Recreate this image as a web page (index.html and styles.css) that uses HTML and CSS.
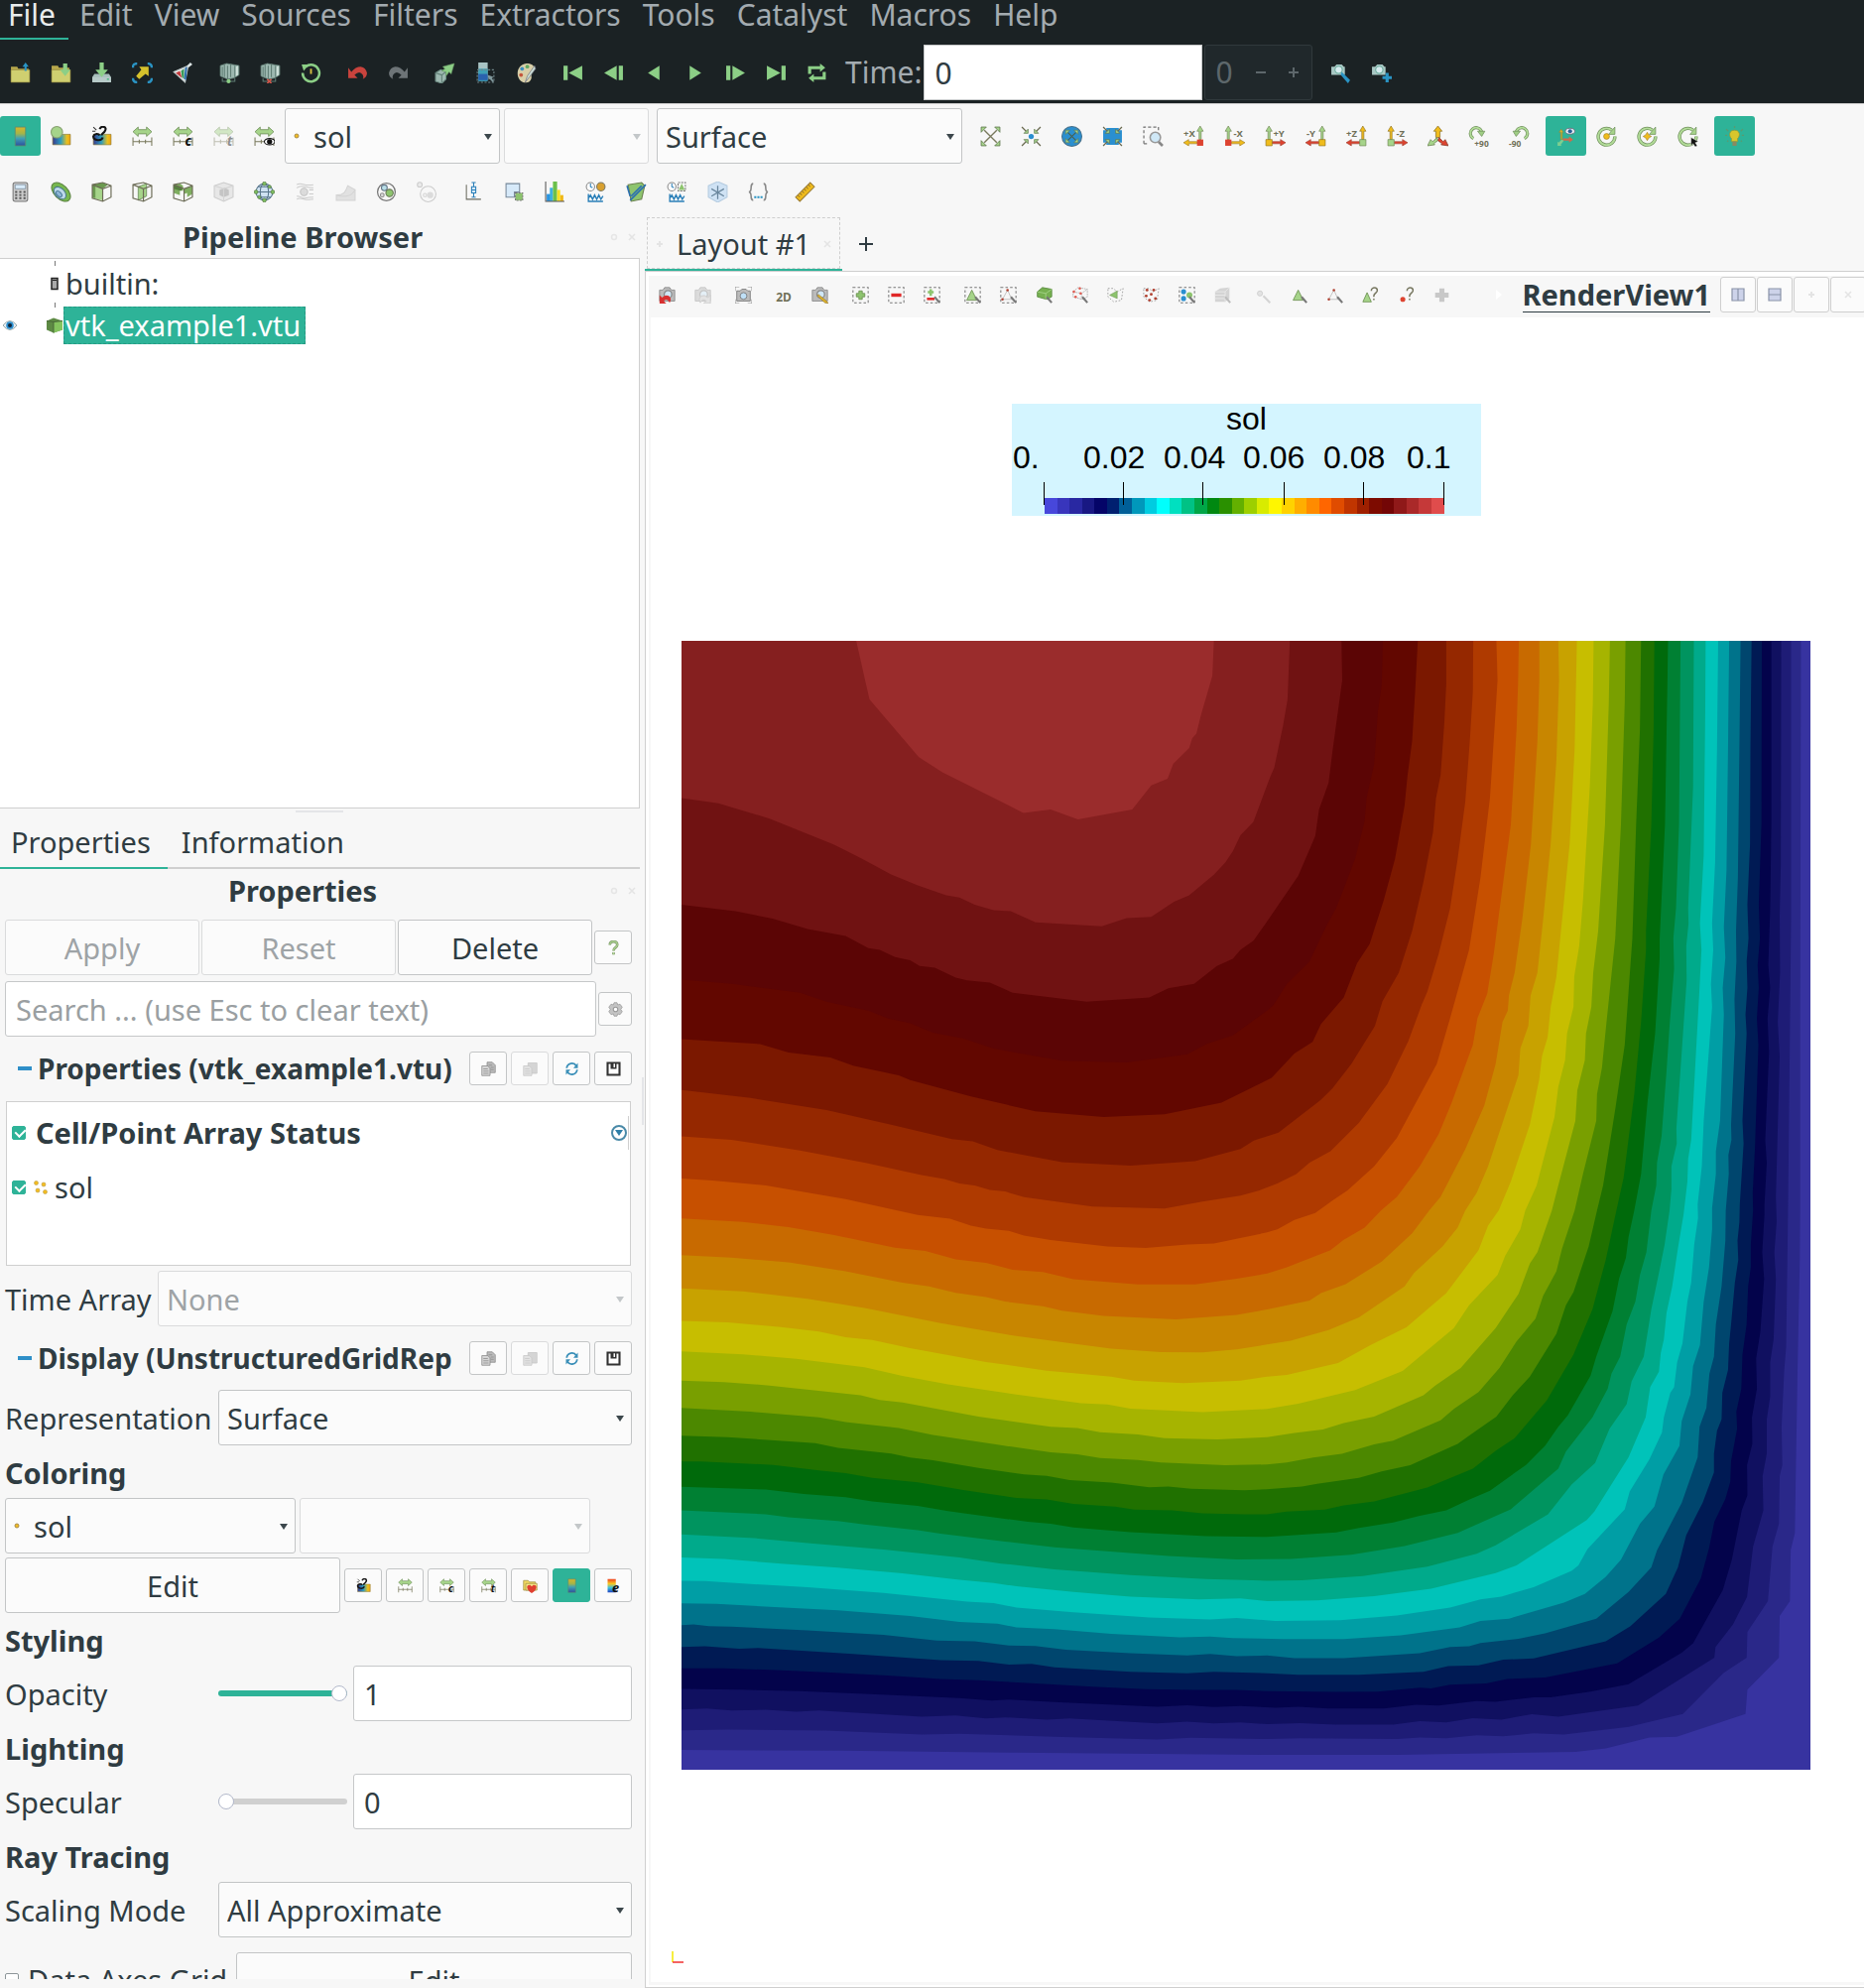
FILE: index.html
```html
<!DOCTYPE html>
<html lang="en">
<head>
<meta charset="utf-8">
<title>ParaView</title>
<link rel="stylesheet" href="styles.css">
</head>
<body>
<svg class="defs" aria-hidden="true">
<defs>
<linearGradient id="lut" x1="0" y1="0" x2="0" y2="1"><stop offset="0" stop-color="#d9b52a"/><stop offset=".35" stop-color="#a3b54a"/><stop offset=".6" stop-color="#3fa0b5"/><stop offset="1" stop-color="#2d4f9e"/></linearGradient>
<linearGradient id="lutx" x1="0" y1="0" x2="1" y2="0"><stop offset="0" stop-color="#3a3a8c"/><stop offset=".45" stop-color="#2a9cc0"/><stop offset=".8" stop-color="#e8c020"/><stop offset="1" stop-color="#f0a010"/></linearGradient>
<linearGradient id="jet" x1="0" y1="0" x2="0" y2="1"><stop offset="0" stop-color="#f04020"/><stop offset=".35" stop-color="#f8c820"/><stop offset=".65" stop-color="#3cc0e0"/><stop offset="1" stop-color="#2040c0"/></linearGradient>
</defs>
<symbol id="open" viewBox="0 0 20 20"><path d="M1 4h6l1 2h10v13H1z" fill="#b9a94c"/><path d="M1 7h18v12H1z" fill="#cfcf70" stroke="#8a7f3a" stroke-width=".6"/><path d="M15 0l3 4h-2v4h-2V4h-2z" fill="#2a94c4"/></symbol>
<symbol id="load" viewBox="0 0 20 20"><path d="M1 3h6l1 2h10v14H1z" fill="#b9a94c"/><path d="M1 7h18v12H1z" fill="#cfcf70" stroke="#8a7f3a" stroke-width=".6"/><path d="M12 1h4v6h3l-5 6-5-6h3z" fill="#8ccf86"/></symbol>
<symbol id="save" viewBox="0 0 20 20"><path d="M3 11h14l2 3v5H1v-5z" fill="#a9bfbd"/><path d="M1 14h18v5H1z" fill="#b7cac8"/><path d="M15 16h2" stroke="#5b8" stroke-width="1.500"/><path d="M8 0h4v7h4l-6 7-6-7h4z" fill="#8ccf86"/></symbol>
<symbol id="shot" viewBox="0 0 20 20"><path d="M1 5V4q0-3 4-3M15 1q4 0 4 4M1 15q0 4 4 4M15 19q4 0 4-4" fill="none" stroke="#2a94c4" stroke-width="2.200"/><path d="M16 4v9l-3-2-6 5-3-3 5-6-2-3z" fill="#d6c22c"/></symbol>
<symbol id="prism" viewBox="0 0 20 20"><path d="M1 9l14-6-3 16z" fill="#eee" stroke="#b8c4c4"/><path d="M3 10l4-2 2 7z" fill="#c0393b"/><path d="M8 8l3-2v10l-2-2z" fill="#3a9a5a"/><path d="M12 5l2-1-1 13-2-1z" fill="#2d6fae"/><path d="M14 3l3-3 2 2-4 3z" fill="#dfe8e8"/></symbol>
<symbol id="srv" viewBox="0 0 20 20"><path d="M1 3l6-2 6 1 6 1v9l-5 3-6 1-7-3z" fill="#9db8b0" stroke="#5f7d74" stroke-width=".8"/><path d="M5 2v12M8 3v13M11 2v12M15 3v11M3 4v9" stroke="#5f7d74" stroke-width="1"/><path d="M16 4l2-1v9l-2 1z" fill="#cfe0da"/><path d="M3 15v3h12v-3" fill="none" stroke="#5f7d74"/></symbol>
<symbol id="connect" viewBox="0 0 20 20"><use href="#srv"/><circle cx="9" cy="18" r="2" fill="#8ccf86"/></symbol>
<symbol id="disconnect" viewBox="0 0 20 20"><use href="#srv"/><path d="M7 16l4 4M11 16l-4 4" stroke="#d0564a" stroke-width="1.600"/></symbol>
<symbol id="reset" viewBox="0 0 20 20"><path d="M5 4a8 8 0 1 1-3 6" fill="none" stroke="#8ccf86" stroke-width="2.400"/><path d="M1 2l7 0-5 6z" fill="#8ccf86"/><path d="M10 6v5" stroke="#d8c040" stroke-width="1.800"/></symbol>
<symbol id="undo" viewBox="0 0 20 20"><path d="M1 5v10h9l-3-3q5-5 8 0 1 2 0 4 4-2 4-6-1-5-6-6-5 0-9 5z" fill="#c9433d"/></symbol>
<symbol id="redo" viewBox="0 0 20 20"><path d="M19 5v10h-9l3-3Q8 7 5 12q-1 2 0 4-4-2-4-6 1-5 6-6 5 0 9 5z" fill="#6d7477"/></symbol>
<symbol id="cubeg" viewBox="0 0 20 20"><path d="M1 10l5-3 5 2v7l-4 4-6-2z" fill="#9db8b0" stroke="#6f8f86"/><path d="M1 10l6 2 4-3M7 12v7" fill="none" stroke="#5f7d74"/><path d="M8 4l11-3-3 10-2-2-3 4V9L7 8l3-2z" fill="#8ccf86" stroke="#6a9a68" stroke-width=".6"/></symbol>
<symbol id="lutsel" viewBox="0 0 20 20"><path d="M3 0h9v17H3z" fill="#a9c4c4"/><path d="M3 6h9v12H3z" fill="#3fa0b5"/><path d="M3 11h9v6H3z" fill="#2a62ae"/><path d="M2 7h16v12H2z" fill="none" stroke="#6f8488" stroke-width="1" stroke-dasharray="2 1.500"/><path d="M12 12l6 2-2 1 2 3-1 1-3-3-1 1z" fill="#81989c"/></symbol>
<symbol id="palette" viewBox="0 0 20 20"><path d="M10 1c6 0 9 3 7 6-3 3-2 4-2 8-1 4-4 5-8 4C-1 16 0 2 10 1z" fill="#d8cfa8"/><circle cx="6" cy="6" r="1.800" fill="#3b8fc0"/><circle cx="11" cy="4" r="1.800" fill="#61a860"/><circle cx="5" cy="12" r="1.800" fill="#c4553c"/><path d="M18 3l-7 10-2 6 4-5 6-8z" fill="#c9dcd4" stroke="#667" stroke-width=".6"/></symbol>
<symbol id="first" viewBox="0 0 20 20"><path d="M1 3h4v14H1zM19 3v14L6 10z" fill="#8ccf86"/></symbol>
<symbol id="prev" viewBox="0 0 20 20"><path d="M15 3h4v14h-4zM13 3v14L1 10z" fill="#8ccf86"/></symbol>
<symbol id="back" viewBox="0 0 20 20"><path d="M15 3v14L4 10z" fill="#8ccf86"/></symbol>
<symbol id="play" viewBox="0 0 20 20"><path d="M5 3v14l11-7z" fill="#8ccf86"/></symbol>
<symbol id="next" viewBox="0 0 20 20"><path d="M1 3h4v14H1zM7 3v14l12-7z" fill="#8ccf86"/></symbol>
<symbol id="last" viewBox="0 0 20 20"><path d="M15 3h4v14h-4zM1 3v14l13-7z" fill="#8ccf86"/></symbol>
<symbol id="loop" viewBox="0 0 20 20"><path d="M3 11V5h11M17 9v6H6" fill="none" stroke="#8ccf86" stroke-width="3"/><path d="M13 1l5 4-5 4zM7 11l-5 4 5 4z" fill="#8ccf86"/></symbol>
<symbol id="cam1" viewBox="0 0 20 20"><path d="M1 4h3l2-2h5l2 2h1v8H1z" fill="#a9c8c4"/><circle cx="8" cy="7" r="3.500" fill="#d8ecf0" stroke="#6a9"/><path d="M11 9l8 8-2 3-7-8z" fill="#2a94c4"/></symbol>
<symbol id="cam2" viewBox="0 0 20 20"><path d="M1 4h3l2-2h5l2 2h1v8H1z" fill="#a9c8c4"/><circle cx="8" cy="7" r="3.500" fill="#d8ecf0" stroke="#6a9"/><path d="M14 10h3v3h3v3h-3v3h-3v-3h-3v-3h3z" fill="#2a94c4"/></symbol>
<symbol id="lutbar" viewBox="0 0 20 20"><path d="M5 1h10v18H5z" fill="url(#lut)" stroke="#5a8a70" stroke-width=".8"/></symbol>
<symbol id="solid" viewBox="0 0 20 20"><path d="M2 8h17v10H2z" fill="url(#lutx)" stroke="#887730" stroke-width=".6"/><circle cx="6" cy="6" r="5.500" fill="#a6d48a" stroke="#86a070"/></symbol>
<symbol id="link" viewBox="0 0 20 20"><path d="M2 8h17v10H2z" fill="url(#lutx)" stroke="#887730" stroke-width=".6"/><path d="M8 3c2-4 8-2 5 2-1 2-3 2-3 4M11 11c-1 4-9 3-9-1 1-3 5-3 6-1" fill="none" stroke="#151515" stroke-width="2"/><path d="M2 1l3 3M1 5h3" stroke="#333"/></symbol>
<symbol id="rng" viewBox="0 0 20 20"><path d="M1 5.500l5-4.500v2.500h8V1l5 4.500-5 4.500V7.500H6V10z" fill="#a6d48a" stroke="#71905c" stroke-width=".8"/><path d="M1 11v8M19 11v8M1 15h18M7 13v4M13 13v4" stroke="#79795c" fill="none"/></symbol>
<symbol id="rngv" viewBox="0 0 20 20"><use href="#rng"/><ellipse cx="15" cy="15" rx="5" ry="3" fill="#fff" stroke="#111"/><circle cx="15" cy="15" r="2.500" fill="#111"/></symbol>
<symbol id="cam-a" viewBox="0 0 20 20"><path d="M4 4l12 12M16 4L4 16" stroke="#79795c" stroke-width="1.300"/><path d="M1 1h5L1 6zM19 1v5l-5-5zM1 19v-5l5 5zM19 19h-5l5-5z" fill="#a6d48a" stroke="#5f7850" stroke-width=".8"/></symbol>
<symbol id="arr4" viewBox="0 0 20 20"><path d="M1 1l5 5M19 1l-5 5M1 19l5-5M19 19l-5-5" stroke="#6a6a50" stroke-width="1.200"/><path d="M7 7H3l4-4zM13 7V3l4 4zM7 13v4l-4-4zM13 13h4l-4 4z" fill="#a6d48a" stroke="#5f7850" stroke-width=".7"/></symbol>
<symbol id="cam-b" viewBox="0 0 20 20"><use href="#arr4"/><circle cx="10" cy="10" r="2.500" fill="#2a8fd0"/></symbol>
<symbol id="cam-c" viewBox="0 0 20 20"><circle cx="10" cy="10" r="9.500" fill="#2a8fd0" stroke="#47708a"/><path d="M6 6l8 8M14 6l-8 8" stroke="#49604c"/><path d="M4 4h4L4 8zM16 4v4l-4-4zM4 16v-4l4 4zM16 16h-4l4-4z" fill="#a6d48a" stroke="#5f7850" stroke-width=".6"/></symbol>
<symbol id="cam-d" viewBox="0 0 20 20"><path d="M4 2h12v2h3v12h-3v2H4v-2H1V4h3z" fill="#2a8fd0"/><use href="#arr4"/></symbol>
<symbol id="zoombox" viewBox="0 0 20 20"><path d="M1 17V1h14v4M1 17h5" fill="none" stroke="#777" stroke-width="1.200" stroke-dasharray="3 2"/><path d="M15 15l4 4" stroke="#888" stroke-width="2.500"/><circle cx="12" cy="11" r="5" fill="#cfe8f7" stroke="#999" stroke-width="1.500"/></symbol>
<symbol id="px" viewBox="0 0 20 20"><path d="M16 0l3 5h-2v8h-2V5h-2z" fill="#a6d48a" stroke="#6a8050" stroke-width=".6"/><path d="M0 16l5-3v2h8v2H5v2z" fill="#f0bc1c" stroke="#a07a20" stroke-width=".6"/><path d="M13 13h6v6h-6z" fill="#dd4330"/></symbol>
<symbol id="mx" viewBox="0 0 20 20"><path d="M4 0l3 5H5v8H3V5H1z" fill="#a6d48a" stroke="#6a8050" stroke-width=".6"/><path d="M20 16l-5-3v2H7v2h8v2z" fill="#f0bc1c" stroke="#a07a20" stroke-width=".6"/><path d="M1 13h6v6H1z" fill="#dd4330"/></symbol>
<symbol id="py" viewBox="0 0 20 20"><path d="M4 0l3 5H5v8H3V5H1z" fill="#a6d48a" stroke="#6a8050" stroke-width=".6"/><path d="M20 16l-5-3v2H7v2h8v2z" fill="#dd4330" stroke="#a04030" stroke-width=".6"/><path d="M1 13h6v6H1z" fill="#f0bc1c" stroke="#8a6f20" stroke-width=".6"/></symbol>
<symbol id="my" viewBox="0 0 20 20"><path d="M16 0l3 5h-2v8h-2V5h-2z" fill="#a6d48a" stroke="#6a8050" stroke-width=".6"/><path d="M0 16l5-3v2h8v2H5v2z" fill="#dd4330" stroke="#a04030" stroke-width=".6"/><path d="M13 13h6v6h-6z" fill="#f0bc1c" stroke="#8a6f20" stroke-width=".6"/></symbol>
<symbol id="pz" viewBox="0 0 20 20"><path d="M16 0l3 5h-2v8h-2V5h-2z" fill="#f0bc1c" stroke="#8a6f20" stroke-width=".6"/><path d="M0 16l5-3v2h8v2H5v2z" fill="#dd4330" stroke="#a04030" stroke-width=".6"/><path d="M13 13h6v6h-6z" fill="#a6d48a" stroke="#6a8050" stroke-width=".6"/></symbol>
<symbol id="mz" viewBox="0 0 20 20"><path d="M4 0l3 5H5v8H3V5H1z" fill="#f0bc1c" stroke="#8a6f20" stroke-width=".6"/><path d="M20 16l-5-3v2H7v2h8v2z" fill="#dd4330" stroke="#a04030" stroke-width=".6"/><path d="M1 13h6v6H1z" fill="#a6d48a" stroke="#6a8050" stroke-width=".6"/></symbol>
<symbol id="iso" viewBox="0 0 20 20"><path d="M10 0l4 5h-2v6H8V5H6z" fill="#f0bc1c" stroke="#8a6f20" stroke-width=".7"/><path d="M9 11l-4 4-2-2-3 6 7-1-1-1 4-3z" fill="#a6d48a" stroke="#6a8050" stroke-width=".7"/><path d="M11 11l4 4 2-2 3 6-7-1 1-1-4-3z" fill="#dd4330" stroke="#803a2a" stroke-width=".7"/></symbol>
<symbol id="rot1" viewBox="0 0 20 20"><path d="M5 12A5.500 5.500 0 1 1 13 6" fill="none" stroke="#6f8f5c" stroke-width="3"/><path d="M5 12A5.500 5.500 0 1 1 13 6" fill="none" stroke="#b2dc98" stroke-width="1.600"/><path d="M9 5h7l-3 5z" fill="#9fce84" stroke="#6f8f5c" stroke-width=".7"/></symbol>
<symbol id="rot2" viewBox="0 0 20 20"><path d="M15 12A5.500 5.500 0 1 0 7 6" fill="none" stroke="#6f8f5c" stroke-width="3"/><path d="M15 12A5.500 5.500 0 1 0 7 6" fill="none" stroke="#b2dc98" stroke-width="1.600"/><path d="M11 5H4l3 5z" fill="#9fce84" stroke="#6f8f5c" stroke-width=".7"/></symbol>
<symbol id="axes" viewBox="0 0 20 20"><path d="M5 13V6H3.500l2-3 2 3H6.500v7z" fill="#d8b52a" stroke="#8a8a40" stroke-width=".6"/><path d="M7 12h6v-2l4 3-4 3v-2H7z" fill="#d06a4c"/><path d="M6 13l-3 3-1-1v4h4l-1-1 3-4z" fill="#7ccf90"/><ellipse cx="14" cy="5" rx="4.500" ry="2.800" fill="#e8eef4" stroke="#667" stroke-width=".8"/><circle cx="14" cy="5" r="2" fill="#2a5f98"/></symbol>
<symbol id="ring" viewBox="0 0 20 20"><path d="M15 4a8 8 0 1 0 3 6" fill="none" stroke="#6f8f5c" stroke-width="3.200"/><path d="M15 4a8 8 0 1 0 3 6" fill="none" stroke="#b2dc98" stroke-width="1.800"/><path d="M18 1v7h-6z" fill="#a6d48a" stroke="#6f8f5c" stroke-width=".7"/></symbol>
<symbol id="ctr1" viewBox="0 0 20 20"><use href="#ring"/><circle cx="10" cy="10" r="2.800" fill="#f0bc1c" stroke="#a08030" stroke-width=".6"/></symbol>
<symbol id="ctr2" viewBox="0 0 20 20"><use href="#ring"/><path d="M10 6l1.500 2.500L14 10l-2.500 1.500L10 14l-1.500-2.500L6 10l2.500-1.500z" fill="#f0bc1c" stroke="#a08030" stroke-width=".6"/></symbol>
<symbol id="ctr3" viewBox="0 0 20 20"><use href="#ring"/><path d="M13 11l7 4-3 1 2 3-2 1-2-3-2 2z" fill="#111" stroke="#fff" stroke-width=".4"/></symbol>
<symbol id="bulb" viewBox="0 0 20 20"><path d="M10 4c5 0 6 5 3 8v3H7v-3C4 9 5 4 10 4z" fill="#d8c62c" stroke="#8a9a40" stroke-width=".8"/><path d="M8 15h4v4H8z" fill="#8a8a60"/><path d="M10 0v2M2 3l2 2M18 3l-2 2M1 9h2M19 9h-2M3 15l1-1M17 15l-1-1" stroke="#5a9a70" stroke-width="1.200"/></symbol>
<symbol id="calc" viewBox="0 0 20 20"><rect x="3" y="1" width="14" height="18" rx="2" fill="#ccc" stroke="#777"/><path d="M5 3h10v4H5z" fill="#d8ebfa" stroke="#789" stroke-width=".7"/><path d="M5 10h10M5 13h10M5 16h10" stroke="#555" stroke-width="1.800" stroke-dasharray="2 2"/></symbol>
<symbol id="contour" viewBox="0 0 20 20"><ellipse cx="10" cy="10" rx="11" ry="6.500" transform="rotate(45 10 10)" fill="#77b84e" stroke="#5a8040"/><ellipse cx="9" cy="11" rx="7" ry="4.500" transform="rotate(45 9 11)" fill="#bcd8ea" stroke="#4a7a88"/><ellipse cx="8" cy="12" rx="3.500" ry="2" transform="rotate(45 8 12)" fill="#8fb8d8" stroke="#4a7a98"/></symbol>
<symbol id="wire" viewBox="0 0 20 20"><path d="M1 3l10-2 8 3v11l-8 4-10-3zM1 3l10 4 8-3M11 7v12" fill="none" stroke="#6b6b55" stroke-width="1.100"/></symbol>
<symbol id="clip" viewBox="0 0 20 20"><path d="M1 3l10 3v12L1 16z" fill="#a6d48a"/><path d="M1 3l10-2 5 2-5 4z" fill="#6b9a50"/><path d="M1 3l3 1v12l-3-1z" fill="#6b9a50"/><use href="#wire"/></symbol>
<symbol id="slice" viewBox="0 0 20 20"><path d="M6 5l8-3v12l-8 4z" fill="#a6d48a" stroke="#5f8050" stroke-width=".7"/><use href="#wire"/></symbol>
<symbol id="thresh" viewBox="0 0 20 20"><path d="M1 3l6-1 3 2v5l-3-1v5l-6-2zM11 7l8-3v8l-5 3v-4l-3 1z" fill="#7fae60"/><path d="M1 3l9 3-2 3-7-2z" fill="#55803e"/><use href="#wire"/></symbol>
<symbol id="extract" viewBox="0 0 20 20"><path d="M1 4l9-3 9 3v11l-9 4-9-4z" fill="#d5d5d5" stroke="#999"/><path d="M6 8l5-2 4 2v5l-5 2-4-2z" fill="#888"/><path d="M1 4l9 3 9-3M10 7v12" fill="none" stroke="#aaa"/></symbol>
<symbol id="glyph" viewBox="0 0 20 20"><circle cx="10" cy="10" r="8" fill="#cfe2f2" stroke="#57748a"/><ellipse cx="10" cy="10" rx="4" ry="8" fill="none" stroke="#57748a"/><path d="M2 10h16M4 5h12M4 15h12" stroke="#57748a"/><g fill="#7fc060" stroke="#507040" stroke-width=".6"><circle cx="10" cy="2" r="1.800"/><circle cx="10" cy="18" r="1.800"/><circle cx="2" cy="10" r="1.800"/><circle cx="18" cy="10" r="1.800"/><circle cx="5" cy="15" r="1.500"/><circle cx="15" cy="5" r="1.500"/></g></symbol>
<symbol id="stream" viewBox="0 0 20 20"><circle cx="9" cy="10" r="3.500" fill="#bbb" stroke="#888"/><path d="M2 3c5-3 6 2 16 0M2 6c4-3 6-1 9-1 3 1 5 1 7 1M2 17c5-3 6 2 16 0M2 14c4 0 5 2 8 2 3-1 5-1 8-1M14 8h4M14 12h4" fill="none" stroke="#999"/></symbol>
<symbol id="warp" viewBox="0 0 20 20"><path d="M1 13c7 0 9-3 11-9l7 4v10H1z" fill="#c8c8c8" stroke="#aaa"/><path d="M1 13c8 2 14 2 18-5" fill="none" stroke="#aaa"/></symbol>
<symbol id="group" viewBox="0 0 20 20"><circle cx="10" cy="10" r="8.500" fill="#f7f7f7" stroke="#777" stroke-width="1.200"/><circle cx="8" cy="6" r="2.800" fill="#b9dfe8" stroke="#678"/><circle cx="13" cy="11" r="3.500" fill="#8dc46e" stroke="#675"/><circle cx="6" cy="13" r="1.800" fill="#ddd" stroke="#888"/></symbol>
<symbol id="ungroup" viewBox="0 0 20 20"><circle cx="11" cy="12" r="7.500" fill="#f7f7f7" stroke="#999"/><circle cx="3" cy="3" r="2.300" fill="#ddd" stroke="#999"/><circle cx="13" cy="13" r="3" fill="#bbb"/><circle cx="8" cy="13" r="1.600" fill="none" stroke="#aaa"/></symbol>
<symbol id="probe" viewBox="0 0 20 20"><path d="M3 3v14h14" fill="none" stroke="#6b6b60"/><path d="M10 1v14M8 1h4M8 15h4" stroke="#2a7fb8"/><path d="M8 5h4v6H8zM8 8h4" fill="#d6eafa" stroke="#2a7fb8"/></symbol>
<symbol id="extsel" viewBox="0 0 20 20"><path d="M2 2h13v8h-5v5H2z" fill="#d6e9f9" stroke="#789"/><path d="M11 11h7v7h-7z" fill="#8dc46e" stroke="#777" stroke-dasharray="2 1"/></symbol>
<symbol id="hist" viewBox="0 0 20 20"><path d="M2 12h4v7H2z" fill="#2a94e0"/><path d="M5 6h3v13H5z" fill="#3cb0e0"/><path d="M8 0h4v19H8z" fill="#6cc04a"/><path d="M12 8h3v11h-3z" fill="#f8e020"/><path d="M15 13h3v6h-3z" fill="#f0b818"/><path d="M1 0v19h18" fill="none" stroke="#555"/></symbol>
<symbol id="wave" viewBox="0 0 20 20"><path d="M3 12v7h14M3 16l2-3 2 4 2-4 2 4 2-4 2 4 2-3" fill="none" stroke="#2a7fb8" stroke-width="1.300"/></symbol>
<symbol id="time1" viewBox="0 0 20 20"><circle cx="5" cy="5" r="4" fill="#fff" stroke="#888"/><path d="M5 2v3l2 1" fill="none" stroke="#2a7fb8"/><circle cx="15" cy="5" r="4" fill="#d8a030" stroke="#776"/><use href="#wave"/></symbol>
<symbol id="pline" viewBox="0 0 20 20"><path d="M2 3l13-2 3 3-3 13-10 2z" fill="#8dc46e" stroke="#6b8050"/><path d="M1 4l3 10M4 18L19 3M5 14l10-10" stroke="#2a6fb0" stroke-width="1.500" fill="none"/></symbol>
<symbol id="time2" viewBox="0 0 20 20"><circle cx="5" cy="5" r="4" fill="#fff" stroke="#888"/><path d="M5 2v3l2 1" fill="none" stroke="#2a7fb8"/><path d="M11 1h7v8h-7z" fill="none" stroke="#777" stroke-dasharray="2 1"/><path d="M14.500 2l3 6h-6z" fill="#8dc46e"/><use href="#wave"/></symbol>
<symbol id="frost" viewBox="0 0 20 20"><path d="M1 4l9-4 9 4v11l-9 5-9-5z" fill="#cfe2f4" stroke="#b5cce0"/><path d="M10 4v13M4 7l12 7M16 7L4 14" stroke="#68859c" stroke-width="1.200"/></symbol>
<symbol id="braces" viewBox="0 0 20 20"><path d="M5 2C1 2 5 9 1 10c4 1 0 8 4 8M15 2c4 0 0 7 4 8-4 1 0 8-4 8" fill="none" stroke="#888" stroke-width="1.500"/><path d="M6 15h2M9 15h2M12 15h2" stroke="#2a94c4" stroke-width="2"/></symbol>
<symbol id="ruler" viewBox="0 0 20 20"><path d="M15 1l4 4L5 19l-4-4z" fill="#f0bc1c" stroke="#9a7a30"/><path d="M13 3l2 2M11 5l2 2M9 7l2 2M7 9l2 2M5 11l2 2M3 13l2 2" stroke="#9a7a30"/></symbol>
<symbol id="camera" viewBox="0 0 20 20"><path d="M1 4h4l2-3h6l2 3h4v13H1z" fill="#bbb" stroke="#888"/><circle cx="11" cy="9" r="4.500" fill="#cfe6f5" stroke="#888" stroke-width="1.500"/></symbol>
<symbol id="camundo" viewBox="0 0 20 20"><use href="#camera"/><path d="M1 10v10h8l-3-3q4-4 7 2 3-5-1-8-4-2-8 2z" fill="#d83030"/></symbol>
<symbol id="camredo" viewBox="0 0 20 20"><use href="#camera"/><path d="M19 10v10h-8l3-3q-4-4-7 2-3-5 1-8 4-2 8 2z" fill="#ccc" stroke="#999"/></symbol>
<symbol id="capture" viewBox="0 0 20 20"><path d="M0 5V0h5M15 0h5v5M20 15v5h-5M5 20H0v-5" fill="none" stroke="#888"/><path d="M2 5h4l2-2h5l2 2h3v12H2z" fill="#bbb" stroke="#777"/><circle cx="10" cy="11" r="4" fill="#bfe0f7" stroke="#777"/></symbol>
<symbol id="camedit" viewBox="0 0 20 20"><use href="#camera"/><path d="M8 9l10 8 2 3-4-1-9-8z" fill="#e0b428" stroke="#8a7030" stroke-width=".7"/></symbol>
<symbol id="dash" viewBox="0 0 20 20"><path d="M1 1h18v18H1z" fill="none" stroke="#777" stroke-width="1.200" stroke-dasharray="3 2.500"/></symbol>
<symbol id="wand" viewBox="0 0 20 20"><path d="M13 12l6 7" stroke="#777" stroke-width="2.500"/></symbol>
<symbol id="seladd" viewBox="0 0 20 20"><use href="#dash"/><path d="M8 5h4v3h3v4h-3v3H8v-3H5V8h3z" fill="#8dc46e" stroke="#6b9050"/></symbol>
<symbol id="selsub" viewBox="0 0 20 20"><use href="#dash"/><path d="M4 8h12v4H4z" fill="#e02828"/></symbol>
<symbol id="seltog" viewBox="0 0 20 20"><use href="#dash"/><path d="M7 3h3v2h2v3h-2v3H7V8H5V5h2z" fill="#8dc46e"/><path d="M4 13h9v3H4z" fill="#e02828"/><use href="#wand"/></symbol>
<symbol id="tri" viewBox="0 0 20 20"><path d="M9 4l6 12H3z" fill="#a6d48a" stroke="#6b9050"/></symbol>
<symbol id="selcell" viewBox="0 0 20 20"><use href="#dash"/><use href="#tri"/><use href="#wand"/></symbol>
<symbol id="pts" viewBox="0 0 20 20"><path d="M9 4L3 15h11z" fill="none" stroke="#bbb"/><g fill="#b04030"><circle cx="9" cy="4" r="1.500"/><circle cx="3" cy="15" r="1.500"/></g></symbol>
<symbol id="selpt" viewBox="0 0 20 20"><use href="#dash"/><use href="#pts"/><use href="#wand"/></symbol>
<symbol id="fruc" viewBox="0 0 20 20"><path d="M2 6l6-5 11 2v9l-6 3-11-3z" fill="#76b050" stroke="#5a8a40"/><path d="M2 6l10 2 7-5M12 8v7" fill="none" stroke="#a6d48a"/><use href="#wand"/></symbol>
<symbol id="frup" viewBox="0 0 20 20"><path d="M2 6l6-5 11 2v9l-6 3-11-3zM2 6l10 2 7-5M12 8v7" fill="none" stroke="#aaa" stroke-dasharray="2 1"/><g fill="#e05a50"><circle cx="3" cy="6" r="1.500"/><circle cx="10" cy="2" r="1.500"/><circle cx="5" cy="12" r="1.500"/><circle cx="11" cy="8" r="1.500"/></g><use href="#wand"/></symbol>
<symbol id="poly" viewBox="0 0 20 20"><path d="M1 2h6l5 4 7-4-2 14-9 2-7-6z" fill="none" stroke="#999" stroke-dasharray="2 2"/></symbol>
<symbol id="polyc" viewBox="0 0 20 20"><use href="#poly"/><path d="M3 10l9-5v9z" fill="#8dc46e" stroke="#6b9050" stroke-width=".6"/></symbol>
<symbol id="polyp" viewBox="0 0 20 20"><use href="#poly"/><g fill="#b04030"><circle cx="5" cy="4" r="1.700"/><circle cx="13" cy="4" r="1.700"/><circle cx="4" cy="11" r="1.700"/><circle cx="10" cy="9" r="1.700"/><circle cx="15" cy="14" r="1.700"/><circle cx="8" cy="16" r="1.700"/></g></symbol>
<symbol id="blk" viewBox="0 0 20 20"><use href="#dash"/><circle cx="6" cy="6" r="3" fill="#2a8fd0"/><circle cx="6" cy="14" r="3" fill="#2a8fd0"/><circle cx="13" cy="10" r="3.500" fill="#8dc46e"/><use href="#wand"/></symbol>
<symbol id="cubx" viewBox="0 0 20 20"><path d="M1 6l6-4 11-1v13l-5 4H1z" fill="#aaa"/><path d="M1 6h12l5-5M13 6v12M1 10h12M1 14h12" fill="none" stroke="#ddd"/><use href="#wand"/></symbol>
<symbol id="ptx" viewBox="0 0 20 20"><circle cx="6" cy="8" r="3" fill="#ccc" stroke="#999"/><path d="M10 11l8 8" stroke="#aaa" stroke-width="2.500"/></symbol>
<symbol id="icell" viewBox="0 0 20 20"><use href="#tri"/><use href="#wand"/></symbol>
<symbol id="ipt" viewBox="0 0 20 20"><use href="#pts"/><use href="#wand"/></symbol>
<symbol id="qm" viewBox="0 0 20 20"><path d="M11 5c0-5 8-5 7 0-1 3-4 3-4 6v1M14 14v2" fill="none" stroke="#777760" stroke-width="1.800"/></symbol>
<symbol id="hcell" viewBox="0 0 20 20"><path d="M6 7l5 11H1z" fill="#a6d48a" stroke="#6b9050"/><use href="#qm"/></symbol>
<symbol id="hpt" viewBox="0 0 20 20"><circle cx="6" cy="15" r="3" fill="#dd4330"/><use href="#qm"/></symbol>
<symbol id="plus" viewBox="0 0 20 20"><path d="M7 2h6v5h5v6h-5v5H7v-5H2V7h5z" fill="#c8c8c8"/></symbol>
<symbol id="copy" viewBox="0 0 20 20"><path d="M8 1h7l4 4v10H8z" fill="#bbb" stroke="#888"/><path d="M1 6h8l3 3v10H1z" fill="#d5d5d5" stroke="#888"/><path d="M3 10h6M3 13h7M3 16h7M10 5h5M13 8h4M13 11h4" stroke="#888"/></symbol>
<symbol id="paste" viewBox="0 0 20 20"><path d="M7 2h12v14H7z" fill="#d5d5d5" stroke="#c5c5c5"/><path d="M1 6h8l3 3v10H1z" fill="#e2e2e2" stroke="#c5c5c5"/><path d="M3 10h6M3 13h7M3 16h7" stroke="#c5c5c5"/></symbol>
<symbol id="refresh" viewBox="0 0 20 20"><path d="M3 9a7 7 0 0 1 13-3M17 11a7 7 0 0 1-13 3" fill="none" stroke="#3a8fb8" stroke-width="2.400"/><path d="M18 2v7h-6zM2 18v-7h6z" fill="#3a8fb8"/></symbol>
<symbol id="floppy" viewBox="0 0 20 20"><path d="M2 2h16v16H2z" fill="#fff" stroke="#333" stroke-width="2.800"/><path d="M6 2h8v8H6z" fill="#333"/><path d="M10 3h2v5h-2z" fill="#fff"/></symbol>
<symbol id="help" viewBox="0 0 20 20"><path d="M5 6c0-6 10-6 10 0 0 4-5 3-5 8M10 16v3" fill="none" stroke="#7c9668" stroke-width="3.400"/><path d="M5 6c0-6 10-6 10 0 0 4-5 3-5 8M10 16v3" fill="none" stroke="#aed692" stroke-width="1.600"/></symbol>
<symbol id="gear" viewBox="0 0 20 20"><path d="M8 1h4l1 3 3-1 3 4-2 3 2 3-3 4-3-1-1 3H8l-1-3-3 1-3-4 2-3-2-3 3-4 3 1z" fill="#c4c4c4" stroke="#999"/><circle cx="10" cy="10" r="3" fill="#fff" stroke="#999" stroke-width="1.500"/></symbol>
<symbol id="fav" viewBox="0 0 20 20"><path d="M1 3h6l2 2h8v11H1z" fill="#f0d860" stroke="#a09040"/><path d="M4 7h15v9H4z" fill="#f7e88a" stroke="#a09040"/><path d="M12 20c-9-6-7-12-2-11l2 2 2-2c5-1 7 5-2 11z" fill="#e04030"/></symbol>
<symbol id="lute" viewBox="0 0 20 20"><path d="M2 1h11v18H2z" fill="url(#jet)"/></symbol>
<symbol id="dot" viewBox="0 0 10 10"><circle cx="5" cy="5" r="2" fill="#f5bd1f" stroke="#a58a4a"/></symbol>
<symbol id="splith" viewBox="0 0 14 14"><path d="M1 1h12v12H1zM7 1v12" fill="#cdd3ea" stroke="#8a93a8" stroke-width="1.200"/></symbol>
<symbol id="splitv" viewBox="0 0 14 14"><path d="M1 1h12v12H1zM1 7h12" fill="#cdd3ea" stroke="#8a93a8" stroke-width="1.200"/></symbol>
<symbol id="fplus" viewBox="0 0 8 8"><path d="M4 1v6M1 4h6" stroke="#e4e4e4" stroke-width="2"/></symbol>
<symbol id="fx" viewBox="0 0 8 8"><path d="M1 1l6 6M7 1L1 7" stroke="#e4e4e4" stroke-width="1.600"/></symbol>
<symbol id="fo" viewBox="0 0 8 8"><circle cx="4" cy="4" r="2.500" fill="none" stroke="#e6e6e6" stroke-width="1.500"/></symbol>
</svg>

<header class="dark">
<nav class="menubar">
<a class="on" href="#file">File</a><a href="#edit">Edit</a><a href="#view">View</a><a href="#sources">Sources</a><a href="#filters">Filters</a><a href="#extractors">Extractors</a><a href="#tools">Tools</a><a href="#catalyst">Catalyst</a><a href="#macros">Macros</a><a href="#help-menu">Help</a>
</nav>
<div class="bar bar-main">
<div class="group"><button class="tool" aria-label="Open"><svg><use href="#open"/></svg></button><button class="tool" aria-label="Load state"><svg><use href="#load"/></svg></button><button class="tool" aria-label="Save data"><svg><use href="#save"/></svg></button><button class="tool" aria-label="Save screenshot"><svg><use href="#shot"/></svg></button><button class="tool" aria-label="Catalyst"><svg><use href="#prism"/></svg></button></div>
<div class="group"><button class="tool" aria-label="Connect"><svg><use href="#connect"/></svg></button><button class="tool" aria-label="Disconnect"><svg><use href="#disconnect"/></svg></button><button class="tool" aria-label="Reset session"><svg><use href="#reset"/></svg></button></div>
<div class="group"><button class="tool" aria-label="Undo"><svg><use href="#undo"/></svg></button><button class="tool" aria-label="Redo"><svg><use href="#redo"/></svg></button></div>
<div class="group"><button class="tool" aria-label="Auto apply"><svg><use href="#cubeg"/></svg></button><button class="tool" aria-label="Find data"><svg><use href="#lutsel"/></svg></button><button class="tool" aria-label="Palette"><svg><use href="#palette"/></svg></button></div>
<div class="group"><button class="tool" aria-label="First frame"><svg><use href="#first"/></svg></button><button class="tool" aria-label="Previous frame"><svg><use href="#prev"/></svg></button><button class="tool" aria-label="Reverse"><svg><use href="#back"/></svg></button><button class="tool" aria-label="Play"><svg><use href="#play"/></svg></button><button class="tool" aria-label="Next frame"><svg><use href="#next"/></svg></button><button class="tool" aria-label="Last frame"><svg><use href="#last"/></svg></button><button class="tool" aria-label="Loop"><svg><use href="#loop"/></svg></button></div>
<label class="time-label" for="time">Time:</label>
<input class="field time" id="time" type="text" value="0">
<div class="spin"><input type="text" value="0" aria-label="Time step" disabled><svg viewBox="0 0 56 20"><path d="M5 10h10M38 10h10M43 5v10" stroke="#5d676b" stroke-width="2"/></svg></div>
<div class="group"><button class="tool" aria-label="Adjust camera"><svg><use href="#cam1"/></svg></button><button class="tool" aria-label="Add camera"><svg><use href="#cam2"/></svg></button></div>
</div>
</header>

<div class="bar bar-display">
<div class="group tight"><button class="tool active" aria-label="Color legend"><svg><use href="#lutbar"/></svg></button><button class="tool" aria-label="Solid color"><svg><use href="#solid"/></svg></button><button class="tool" aria-label="Separate color map"><svg><use href="#link"/></svg></button><button class="tool" aria-label="Rescale"><svg><use href="#rng"/></svg></button><button class="tool" aria-label="Rescale custom"><svg viewBox="0 0 20 20"><use href="#rng"/><text x="12" y="19" class="axc">c</text></svg></button><button class="tool off" aria-label="Rescale temporal" disabled><svg viewBox="0 0 20 20"><use href="#rng"/><text x="13" y="19" class="axc">t</text></svg></button><button class="tool" aria-label="Rescale visible"><svg><use href="#rngv"/></svg></button></div>
<div class="combo dotted array"><svg class="mark"><use href="#dot"/></svg><select aria-label="Color array"><option>sol</option></select></div>
<div class="combo off component"><select aria-label="Component" disabled><option></option></select></div>
<div class="combo repr"><select aria-label="Display representation"><option>Surface</option></select></div>
<div class="group"><button class="tool" aria-label="Reset camera"><svg><use href="#cam-a"/></svg></button><button class="tool" aria-label="Zoom to data"><svg><use href="#cam-b"/></svg></button><button class="tool" aria-label="Reset closest"><svg><use href="#cam-c"/></svg></button><button class="tool" aria-label="Zoom closest"><svg><use href="#cam-d"/></svg></button><button class="tool" aria-label="Zoom to box"><svg><use href="#zoombox"/></svg></button><button class="tool" aria-label="Positive X"><svg viewBox="0 0 20 20"><use href="#px"/><text x="0" y="10" class="axl">+X</text></svg></button><button class="tool" aria-label="Negative X"><svg viewBox="0 0 20 20"><use href="#mx"/><text x="9" y="10" class="axl">-X</text></svg></button><button class="tool" aria-label="Positive Y"><svg viewBox="0 0 20 20"><use href="#py"/><text x="8" y="10" class="axl">+Y</text></svg></button><button class="tool" aria-label="Negative Y"><svg viewBox="0 0 20 20"><use href="#my"/><text x="1" y="10" class="axl">-Y</text></svg></button><button class="tool" aria-label="Positive Z"><svg viewBox="0 0 20 20"><use href="#pz"/><text x="0" y="10" class="axl">+Z</text></svg></button><button class="tool" aria-label="Negative Z"><svg viewBox="0 0 20 20"><use href="#mz"/><text x="9" y="10" class="axl">-Z</text></svg></button><button class="tool" aria-label="Isometric"><svg><use href="#iso"/></svg></button><button class="tool" aria-label="Rotate clockwise"><svg viewBox="0 0 20 20"><use href="#rot1"/><text x="6" y="20" class="axs">+90</text></svg></button><button class="tool" aria-label="Rotate counterclockwise"><svg viewBox="0 0 20 20"><use href="#rot2"/><text x="0" y="20" class="axs">-90</text></svg></button></div>
<div class="group"><button class="tool active" aria-label="Orientation axes"><svg><use href="#axes"/></svg></button><button class="tool" aria-label="Show center"><svg><use href="#ctr1"/></svg></button><button class="tool" aria-label="Reset center"><svg><use href="#ctr2"/></svg></button><button class="tool" aria-label="Pick center"><svg><use href="#ctr3"/></svg></button></div>
<div class="group"><button class="tool active" aria-label="Light"><svg><use href="#bulb"/></svg></button></div>
</div>

<div class="bar bar-filters">
<div class="group"><button class="tool" aria-label="Calculator"><svg><use href="#calc"/></svg></button><button class="tool" aria-label="Contour"><svg><use href="#contour"/></svg></button><button class="tool" aria-label="Clip"><svg><use href="#clip"/></svg></button><button class="tool" aria-label="Slice"><svg><use href="#slice"/></svg></button><button class="tool" aria-label="Threshold"><svg><use href="#thresh"/></svg></button><button class="tool off" aria-label="Extract subset" disabled><svg><use href="#extract"/></svg></button><button class="tool" aria-label="Glyph"><svg><use href="#glyph"/></svg></button><button class="tool off" aria-label="Stream tracer" disabled><svg><use href="#stream"/></svg></button><button class="tool off" aria-label="Warp" disabled><svg><use href="#warp"/></svg></button><button class="tool" aria-label="Group datasets"><svg><use href="#group"/></svg></button><button class="tool off" aria-label="Extract level" disabled><svg><use href="#ungroup"/></svg></button></div>
<div class="group"><button class="tool" aria-label="Probe"><svg><use href="#probe"/></svg></button><button class="tool" aria-label="Extract selection"><svg><use href="#extsel"/></svg></button><button class="tool" aria-label="Histogram"><svg><use href="#hist"/></svg></button><button class="tool" aria-label="Plot global variables"><svg><use href="#time1"/></svg></button><button class="tool" aria-label="Plot over line"><svg><use href="#pline"/></svg></button><button class="tool" aria-label="Plot selection over time"><svg><use href="#time2"/></svg></button><button class="tool" aria-label="Force time"><svg><use href="#frost"/></svg></button><button class="tool" aria-label="Programmable filter"><svg><use href="#braces"/></svg></button></div>
<div class="group"><button class="tool" aria-label="Ruler"><svg><use href="#ruler"/></svg></button></div>
</div>

<main>
<aside>
<div class="dock-title"><h2>Pipeline Browser</h2><svg><use href="#fo"/></svg><svg><use href="#fx"/></svg></div>
<div class="tree">
<div class="node root"><svg class="server" viewBox="0 0 8 13"><path d="M1 1h6v11H1z" fill="#aaa" stroke="#222" stroke-width="1.500"/><path d="M2 3h4" stroke="#222"/></svg><span>builtin:</span></div>
<div class="node"><svg class="eye" viewBox="0 0 14 10"><path d="M0 5q7-9 14 0-7 9-14 0z" fill="#e8eef2" stroke="#9aa"/><circle cx="7" cy="5" r="3.800" fill="#2a8fd0"/><circle cx="7" cy="5" r="2" fill="#123"/></svg><svg class="cube" viewBox="0 0 16 15"><path d="M0 3l7-3 9 3v9l-9 3-7-3z" fill="#5d8a44"/><path d="M7 4l9-1v9l-9 3z" fill="#84c45e"/><path d="M0 3l7 1 9-1M7 4v11" fill="none" stroke="#4a6a38"/></svg><span class="picked">vtk_example1.vtu</span></div>
</div>
<div class="handle-h"></div>
<nav class="tabs"><a class="on" href="#properties">Properties</a><a href="#information">Information</a></nav>
<div class="dock-title"><h2>Properties</h2><svg><use href="#fo"/></svg><svg><use href="#fx"/></svg></div>
<div class="props">
<div class="row actions"><button class="btn grow" disabled>Apply</button><button class="btn grow" disabled>Reset</button><button class="btn grow">Delete</button><button class="mini" aria-label="Help"><svg><use href="#help"/></svg></button></div>
<div class="row search"><input class="field grow" type="text" aria-label="Search properties" placeholder="Search ... (use Esc to clear text)"><button class="mini narrow" aria-label="Advanced"><svg><use href="#gear"/></svg></button></div>
<div class="section"><svg class="minus" viewBox="0 0 14 4"><path d="M0 0h14v4H0z" fill="#2f8fc8"/></svg><h3>Properties (vtk_example1.vtu)</h3><div class="minis"><button class="mini" aria-label="Copy"><svg><use href="#copy"/></svg></button><button class="mini" aria-label="Paste" disabled><svg><use href="#paste"/></svg></button><button class="mini" aria-label="Restore defaults"><svg><use href="#refresh"/></svg></button><button class="mini" aria-label="Save defaults"><svg><use href="#floppy"/></svg></button></div></div>
<div class="status">
<div class="entry head"><input type="checkbox" id="arr-all" checked><label for="arr-all">Cell/Point Array Status</label><svg class="drop" viewBox="0 0 18 18"><circle cx="9" cy="9" r="7" fill="#fff" stroke="#4a8aa8" stroke-width="2"/><path d="M5 6h8l-4 6z" fill="#2f7fa8"/></svg></div>
<div class="entry"><input type="checkbox" id="arr-sol" checked><svg class="ptsicon" viewBox="0 0 14 14"><g fill="#f5bd1f" stroke="#b59a4a" stroke-width=".6"><circle cx="2.500" cy="2.500" r="2"/><circle cx="10" cy="4" r="2"/><circle cx="4" cy="10" r="2"/><circle cx="11.500" cy="11.500" r="2"/></g></svg><label for="arr-sol">sol</label></div>
</div>
<div class="form time-row"><label for="tarr">Time Array</label><div class="combo off"><select id="tarr" disabled><option>None</option></select></div></div>
<div class="section"><svg class="minus" viewBox="0 0 14 4"><path d="M0 0h14v4H0z" fill="#2f8fc8"/></svg><h3>Display (UnstructuredGridRepresentation)</h3><div class="minis"><button class="mini" aria-label="Copy"><svg><use href="#copy"/></svg></button><button class="mini" aria-label="Paste" disabled><svg><use href="#paste"/></svg></button><button class="mini" aria-label="Restore defaults"><svg><use href="#refresh"/></svg></button><button class="mini" aria-label="Save defaults"><svg><use href="#floppy"/></svg></button></div></div>
<div class="form repr-row"><label for="rep">Representation</label><div class="combo"><select id="rep"><option>Surface</option></select></div></div>
<h4>Coloring</h4>
<div class="row coloring"><div class="combo dotted grow"><svg class="mark"><use href="#dot"/></svg><select aria-label="Coloring array"><option>sol</option></select></div><div class="combo off grow"><select aria-label="Coloring component" disabled><option></option></select></div></div>
<div class="row edit"><button class="btn grow">Edit</button><div class="minis"><button class="mini" aria-label="Separate color map"><svg><use href="#link"/></svg></button><button class="mini" aria-label="Rescale"><svg><use href="#rng"/></svg></button><button class="mini" aria-label="Rescale custom"><svg viewBox="0 0 20 20"><use href="#rng"/><text x="12" y="19" class="axc">c</text></svg></button><button class="mini" aria-label="Rescale temporal"><svg viewBox="0 0 20 20"><use href="#rng"/><text x="13" y="19" class="axc">t</text></svg></button><button class="mini" aria-label="Choose preset"><svg><use href="#fav"/></svg></button><button class="mini active" aria-label="Show legend"><svg><use href="#lutbar"/></svg></button><button class="mini" aria-label="Edit legend"><svg viewBox="0 0 20 20"><use href="#lute"/><text x="8" y="19" class="axe">e</text></svg></button></div></div>
<h4>Styling</h4>
<div class="form"><label for="op">Opacity</label><div class="slide"><input class="full" type="range" min="0" max="1" step="0.1" value="1" aria-label="Opacity slider"><input class="field" id="op" type="text" value="1"></div></div>
<h4>Lighting</h4>
<div class="form"><label for="sp">Specular</label><div class="slide"><input type="range" min="0" max="1" step="0.1" value="0" aria-label="Specular slider"><input class="field" id="sp" type="text" value="0"></div></div>
<h4>Ray Tracing</h4>
<div class="form"><label for="sm">Scaling Mode</label><div class="combo"><select id="sm"><option>All Approximate</option></select></div></div>
<div class="form axes-row"><div class="check"><input type="checkbox" id="dag"><label for="dag">Data Axes Grid</label></div><button class="btn">Edit</button></div>
</div>
<div class="handle-v"></div>
</aside>

<section class="work">
<div class="layout-tabs"><div class="layout-tab"><div class="inner"><svg><use href="#fplus"/></svg><a href="#layout">Layout #1</a><svg><use href="#fx"/></svg></div></div><button class="add" aria-label="Add layout"><svg viewBox="0 0 16 16"><path d="M8 1v14M1 8h14" stroke="#2f3c42" stroke-width="2"/></svg></button></div>
<div class="frame">
<div class="view-bar">
<div class="group"><button class="vt" aria-label="Camera undo"><svg><use href="#camundo"/></svg></button><button class="vt off" aria-label="Camera redo" disabled><svg><use href="#camredo"/></svg></button></div>
<div class="group"><button class="vt" aria-label="Capture"><svg><use href="#capture"/></svg></button></div>
<div class="group"><button class="vt txt">2D</button><button class="vt" aria-label="Camera settings"><svg><use href="#camedit"/></svg></button></div>
<div class="group"><button class="vt" aria-label="Add selection"><svg><use href="#seladd"/></svg></button><button class="vt" aria-label="Subtract selection"><svg><use href="#selsub"/></svg></button><button class="vt" aria-label="Toggle selection"><svg><use href="#seltog"/></svg></button></div>
<div class="group"><button class="vt" aria-label="Select cells"><svg><use href="#selcell"/></svg></button><button class="vt" aria-label="Select points"><svg><use href="#selpt"/></svg></button><button class="vt" aria-label="Select cells through"><svg><use href="#fruc"/></svg></button><button class="vt" aria-label="Select points through"><svg><use href="#frup"/></svg></button><button class="vt" aria-label="Polygon cells"><svg><use href="#polyc"/></svg></button><button class="vt" aria-label="Polygon points"><svg><use href="#polyp"/></svg></button><button class="vt" aria-label="Select block"><svg><use href="#blk"/></svg></button><button class="vt off" aria-label="Interactive block" disabled><svg><use href="#cubx"/></svg></button></div>
<div class="group none"><button class="vt off" aria-label="Interactive select" disabled><svg><use href="#ptx"/></svg></button><button class="vt" aria-label="Interactive cells"><svg><use href="#icell"/></svg></button><button class="vt" aria-label="Interactive points"><svg><use href="#ipt"/></svg></button><button class="vt" aria-label="Hover cells"><svg><use href="#hcell"/></svg></button><button class="vt" aria-label="Hover points"><svg><use href="#hpt"/></svg></button><button class="vt" aria-label="Grow selection"><svg><use href="#plus"/></svg></button></div>
<svg class="more" viewBox="0 0 6 10"><path d="M0 0l6 5-6 5z" fill="#fff"/></svg>
<a class="view-name" href="#view">RenderView1</a>
<div class="corner"><button aria-label="Split horizontal"><svg class="split"><use href="#splith"/></svg></button><button aria-label="Split vertical"><svg class="split"><use href="#splitv"/></svg></button><button aria-label="Maximize"><svg><use href="#fplus"/></svg></button><button aria-label="Close"><svg><use href="#fx"/></svg></button></div>
</div>
<div class="render">
<svg class="legend" viewBox="0 0 473 113" role="img" aria-label="Color legend">
<text x="216" y="26">sol</text>
<text x="1" y="65">0.</text><text x="72" y="65">0.02</text><text x="153" y="65">0.04</text><text x="233" y="65">0.06</text><text x="314" y="65">0.08</text><text x="398" y="65">0.1</text>
<g transform="translate(33 95) scale(12.580 16)" shape-rendering="crispEdges">
<path fill="#4747db" d="M0 0h1v1h-1z"/><path fill="#3835bc" d="M1 0h1v1h-1z"/><path fill="#2928a2" d="M2 0h1v1h-1z"/><path fill="#181883" d="M3 0h1v1h-1z"/><path fill="#040468" d="M4 0h1v1h-1z"/><path fill="#002070" d="M5 0h1v1h-1z"/><path fill="#005f98" d="M6 0h1v1h-1z"/><path fill="#0098bb" d="M7 0h1v1h-1z"/><path fill="#00cce0" d="M8 0h1v1h-1z"/><path fill="#00fffc" d="M9 0h1v1h-1z"/><path fill="#00e0c0" d="M10 0h1v1h-1z"/><path fill="#00c285" d="M11 0h1v1h-1z"/><path fill="#00a648" d="M12 0h1v1h-1z"/><path fill="#008811" d="M13 0h1v1h-1z"/><path fill="#2a9000" d="M14 0h1v1h-1z"/><path fill="#63b000" d="M15 0h1v1h-1z"/><path fill="#9dcf00" d="M16 0h1v1h-1z"/><path fill="#d8eb00" d="M17 0h1v1h-1z"/><path fill="#fff600" d="M18 0h1v1h-1z"/><path fill="#ffd200" d="M19 0h1v1h-1z"/><path fill="#ffae00" d="M20 0h1v1h-1z"/><path fill="#ff8b00" d="M21 0h1v1h-1z"/><path fill="#ff6600" d="M22 0h1v1h-1z"/><path fill="#e04c00" d="M23 0h1v1h-1z"/><path fill="#c03500" d="M24 0h1v1h-1z"/><path fill="#9e2000" d="M25 0h1v1h-1z"/><path fill="#7d0b00" d="M26 0h1v1h-1z"/><path fill="#730606" d="M27 0h1v1h-1z"/><path fill="#8f1919" d="M28 0h1v1h-1z"/><path fill="#aa2929" d="M29 0h1v1h-1z"/><path fill="#c53939" d="M30 0h1v1h-1z"/><path fill="#e04c4c" d="M31 0h1v1h-1z"/>
</g>
<path d="M32.500 79v23M112.500 79v23M192.500 79v23M274.500 79v23M354.500 79v23M435.500 79v23" stroke="#000"/>
</svg>
<svg class="plot" viewBox="18 16 2973 2973" role="img" aria-label="Surface colored by sol">
<path fill="#3733a0" d="M18 16H2991V2989H18z"/>
<path fill="#2a2889" d="M18 16V2937L440 2939 900 2944 1560 2950 1902 2950 2372 2942 2452 2933 2567 2904 2639 2902 2820 2842 2825 2778 2908 2694 2910 2584 2937 2545 2939 2411 2950 2366 2952 2241 2957 1941 2963 1646 2964 1516 2964 1050 2966 16z"/>
<path fill="#1e1c76" d="M18 16V2885L140 2883 400 2886 650 2896 750 2894 1000 2902 1270 2909 1360 2905 1560 2908 1647 2906 1902 2908 1962 2904 2032 2906 2112 2898 2182 2901 2262 2893 2342 2896 2512 2876 2655 2842 2762 2734 2823 2694 2825 2626 2879 2545 2891 2401 2908 2341 2910 2216 2917 2186 2915 2086 2922 1936 2927 1876 2932 1516 2937 1040 2940 750 2940 16z"/>
<path fill="#101060" d="M18 16V2830L85 2828 150 2833 240 2831 320 2836 380 2833 650 2849 740 2846 820 2854 870 2851 980 2857 1040 2854 1270 2867 1350 2862 1420 2867 1490 2864 1560 2869 1647 2866 1742 2870 1892 2870 1962 2861 2032 2864 2102 2853 2177 2857 2257 2843 2327 2849 2537 2820 2738 2694 2741 2666 2787 2606 2824 2534 2840 2401 2867 2306 2865 2216 2876 2156 2876 2066 2885 2006 2885 1916 2894 1856 2900 1696 2896 1626 2902 1546 2900 1480 2910 1110 2905 1020 2911 890 2910 740 2913 600 2914 16z"/>
<path fill="#03034b" d="M18 16V2776L170 2778 330 2782 500 2789 750 2800 835 2807 880 2804 1000 2811 1270 2823 1350 2819 1420 2824 1490 2821 1582 2826 1642 2823 1722 2828 1867 2828 1952 2818 2012 2820 2112 2808 2162 2810 2262 2798 2307 2798 2412 2783 2512 2764 2652 2681 2682 2656 2760 2516 2784 2436 2810 2306 2825 2266 2824 2186 2838 2131 2837 2061 2850 1986 2848 1906 2859 1836 2869 1696 2864 1626 2870 1526 2870 1500 2876 1390 2872 1330 2882 1100 2878 1010 2885 930 2880 870 2885 720 2888 500 2888 16z"/>
<path fill="#001a54" d="M18 16V2722L130 2722 250 2726 400 2732 560 2741 700 2750 800 2753 950 2762 1100 2770 1240 2777 1370 2779 1480 2779 1560 2782 1742 2784 1852 2783 1962 2773 1992 2775 2042 2765 2137 2762 2192 2750 2292 2746 2482 2709 2592 2641 2647 2591 2702 2486 2724 2406 2738 2336 2767 2276 2780 2231 2782 2176 2798 2091 2796 2046 2809 1986 2812 1896 2823 1816 2827 1716 2834 1666 2834 1606 2840 1516 2839 1470 2845 1350 2854 1080 2850 1010 2855 930 2852 870 2858 800 2855 710 2862 500 2863 16z"/>
<path fill="#00466e" d="M18 16V2666L80 2664 170 2670 220 2668 470 2684 700 2700 800 2702 880 2712 940 2710 1000 2719 1200 2731 1350 2735 1420 2731 1560 2735 1642 2739 1802 2739 1972 2731 2037 2716 2117 2714 2182 2699 2262 2696 2452 2651 2517 2611 2610 2526 2642 2456 2664 2371 2707 2286 2737 2206 2737 2156 2745 2096 2757 2066 2759 1996 2774 1936 2777 1866 2782 1816 2792 1706 2801 1646 2799 1596 2804 1546 2805 1500 2815 1340 2812 1280 2823 1050 2820 1000 2825 930 2823 860 2828 800 2825 710 2832 550 2833 300 2836 16z"/>
<path fill="#00738b" d="M18 16V2608L50 2606 90 2611 150 2612 350 2622 550 2634 690 2649 790 2651 880 2662 950 2663 1030 2673 1200 2682 1350 2688 1410 2684 1480 2690 1560 2688 1632 2695 1762 2695 1962 2682 2042 2666 2092 2664 2122 2655 2222 2644 2292 2630 2427 2591 2512 2521 2572 2456 2587 2411 2652 2286 2694 2166 2699 2086 2717 2036 2725 1946 2737 1901 2742 1816 2757 1716 2767 1596 2768 1516 2776 1420 2775 1370 2783 1330 2782 1290 2793 1050 2791 960 2796 860 2795 780 2800 640 2804 300 2807 16z"/>
<path fill="#009ea5" d="M18 16V2551L110 2552 250 2560 430 2569 620 2584 750 2600 850 2604 900 2614 1000 2619 1150 2631 1330 2640 1410 2638 1470 2642 1602 2645 1762 2645 1912 2635 2067 2614 2122 2597 2197 2591 2342 2549 2397 2526 2452 2481 2492 2436 2542 2341 2580 2296 2604 2211 2646 2136 2652 2071 2675 2001 2682 1926 2700 1871 2710 1756 2724 1666 2732 1566 2732 1510 2742 1420 2742 1360 2753 1280 2763 1000 2760 930 2767 850 2763 770 2770 620 2774 300 2777 16z"/>
<path fill="#00c3b9" d="M18 16V2491L80 2492 200 2500 350 2508 550 2523 770 2546 840 2550 900 2562 1050 2574 1250 2588 1410 2593 1480 2589 1582 2597 1752 2595 1902 2583 2042 2562 2122 2540 2177 2533 2262 2508 2362 2465 2380 2451 2404 2408 2502 2303 2515 2256 2567 2171 2600 2101 2605 2061 2622 1996 2632 1981 2640 1916 2654 1866 2667 1756 2677 1706 2685 1606 2695 1536 2694 1500 2705 1400 2710 1280 2732 980 2729 920 2735 830 2732 760 2740 600 2745 300 2748 16z"/>
<path fill="#00aa8b" d="M18 16V2430L130 2434 280 2446 430 2457 600 2472 750 2489 840 2497 900 2506 1050 2521 1200 2533 1380 2540 1490 2538 1560 2545 1692 2543 1842 2532 1992 2512 2162 2471 2217 2451 2402 2331 2422 2309 2512 2166 2557 2061 2569 1981 2592 1941 2597 1891 2605 1856 2612 1786 2627 1716 2642 1616 2657 1526 2667 1440 2669 1380 2677 1330 2699 930 2704 830 2700 760 2710 580 2714 200 2715 16z"/>
<path fill="#00945f" d="M18 16V2369L210 2379 350 2392 550 2409 750 2430 860 2446 1000 2461 1200 2476 1400 2487 1560 2491 1652 2490 1812 2479 1982 2454 2112 2420 2162 2398 2300 2316 2362 2238 2424 2181 2462 2091 2507 2026 2520 1966 2552 1901 2572 1776 2592 1681 2607 1606 2620 1516 2625 1460 2625 1400 2639 1340 2638 1300 2652 1100 2665 910 2664 820 2670 760 2669 720 2682 400 2684 16z"/>
<path fill="#008033" d="M18 16V2306L240 2316 300 2324 430 2334 500 2343 640 2358 700 2367 870 2388 1000 2403 1130 2413 1300 2426 1480 2435 1622 2434 1782 2423 1922 2400 2062 2365 2202 2303 2327 2196 2347 2151 2417 2061 2457 1986 2467 1946 2490 1901 2507 1816 2530 1756 2542 1686 2559 1626 2572 1516 2585 1450 2587 1390 2599 1320 2612 1150 2620 1030 2632 880 2630 800 2637 720 2645 500 2649 16z"/>
<path fill="#006a0b" d="M18 16V2244L240 2251 340 2263 450 2271 520 2282 640 2294 720 2308 930 2336 990 2341 1050 2351 1200 2363 1400 2374 1560 2376 1622 2372 1742 2364 1802 2352 1892 2338 1962 2320 2032 2306 2092 2278 2147 2254 2242 2186 2292 2136 2327 2086 2352 2056 2412 1951 2427 1901 2470 1781 2487 1696 2505 1641 2512 1586 2527 1516 2545 1420 2562 1230 2582 1050 2594 850 2594 800 2608 500 2614 150 2616 16z"/>
<path fill="#207100" d="M18 16V2177L70 2177 260 2186 380 2201 450 2208 520 2220 640 2232 760 2252 900 2273 980 2277 1050 2289 1160 2296 1210 2304 1310 2306 1390 2314 1500 2316 1560 2316 1612 2309 1712 2304 1762 2293 1842 2282 1982 2246 2102 2196 2162 2149 2212 2116 2297 2016 2367 1896 2417 1776 2452 1646 2480 1516 2499 1430 2527 1210 2545 1020 2558 830 2558 780 2572 500 2578 250 2580 16z"/>
<path fill="#4c8800" d="M18 16V2109L140 2113 370 2129 430 2141 570 2156 620 2167 680 2174 800 2194 920 2211 980 2215 1040 2226 1150 2233 1250 2245 1300 2243 1360 2249 1500 2253 1560 2250 1652 2243 1692 2236 1802 2220 1862 2203 1937 2187 2062 2131 2092 2109 2164 2059 2207 2003 2252 1954 2322 1841 2347 1766 2367 1731 2407 1611 2429 1516 2445 1450 2477 1250 2502 1080 2522 800 2532 500 2542 250 2545 16z"/>
<path fill="#799f00" d="M18 16V2036L200 2046 380 2061 450 2073 590 2089 680 2107 850 2133 990 2153 1060 2158 1120 2168 1220 2173 1280 2180 1450 2187 1560 2185 1612 2180 1682 2167 1757 2157 1842 2132 1892 2122 2017 2069 2052 2039 2117 1994 2172 1931 2217 1861 2267 1801 2287 1741 2322 1676 2337 1616 2370 1516 2392 1420 2427 1280 2429 1210 2442 1140 2454 1020 2477 800 2492 500 2502 180 2504 16z"/>
<path fill="#a6b400" d="M18 16V1964L130 1968 250 1977 490 2003 540 2015 600 2022 800 2059 990 2086 1060 2089 1120 2100 1220 2106 1290 2116 1430 2119 1560 2113 1632 2102 1707 2093 1762 2076 1842 2059 1972 2003 2002 1978 2070 1931 2162 1826 2222 1736 2252 1656 2272 1626 2310 1516 2327 1450 2372 1280 2377 1200 2397 1120 2400 1050 2414 980 2419 890 2432 780 2450 500 2460 180 2463 16z"/>
<path fill="#c7be00" d="M18 16V1887L180 1895 320 1907 500 1929 600 1952 720 1974 900 2001 1070 2024 1140 2027 1200 2038 1390 2047 1560 2039 1642 2025 1792 1989 1917 1939 2052 1826 2092 1766 2167 1686 2187 1636 2227 1566 2240 1516 2270 1450 2317 1270 2327 1190 2345 1120 2350 1050 2367 980 2369 900 2382 820 2392 700 2410 400 2418 180 2420 16z"/>
<path fill="#c8a200" d="M18 16V1807L140 1811 280 1823 380 1835 450 1850 520 1857 620 1879 820 1915 980 1938 1150 1954 1210 1964 1340 1971 1490 1964 1560 1954 1612 1949 1747 1918 1832 1871 1927 1824 2032 1734 2117 1621 2142 1556 2170 1516 2202 1440 2252 1290 2277 1170 2284 1110 2299 1060 2307 980 2322 900 2337 750 2357 550 2370 300 2376 16z"/>
<path fill="#c88600" d="M18 16V1721L180 1729 350 1749 500 1773 700 1813 900 1847 1060 1868 1150 1880 1280 1889 1390 1890 1480 1882 1560 1869 1622 1859 1722 1831 1802 1798 1922 1716 1947 1681 2022 1611 2062 1561 2082 1516 2112 1470 2142 1400 2172 1310 2222 1160 2227 1090 2248 1030 2254 950 2272 890 2287 750 2307 550 2322 330 2329 120 2327 16z"/>
<path fill="#c86a00" d="M18 16V1634L150 1640 300 1653 450 1676 600 1706 670 1716 740 1733 820 1744 870 1756 970 1768 1020 1780 1130 1794 1320 1803 1480 1791 1560 1777 1672 1753 1702 1734 1767 1710 1862 1651 1942 1576 1987 1516 2017 1480 2082 1355 2132 1240 2162 1130 2180 1020 2194 990 2197 950 2212 890 2232 750 2255 550 2272 280 2277 120 2277 16z"/>
<path fill="#c75000" d="M18 16V1537L180 1546 300 1560 420 1581 580 1614 660 1623 740 1645 820 1654 890 1672 970 1678 1050 1697 1220 1711 1370 1711 1480 1696 1560 1682 1612 1666 1662 1646 1727 1621 1762 1593 1817 1561 1860 1516 1902 1480 1962 1400 2012 1315 2047 1230 2102 1080 2114 1010 2140 945 2157 840 2182 650 2202 500 2217 250 2221 130 2223 16z"/>
<path fill="#af3a00" d="M18 16V1432L100 1437 240 1450 450 1486 640 1528 725 1538 780 1556 820 1564 880 1570 920 1582 990 1594 1140 1611 1240 1615 1350 1606 1420 1603 1560 1574 1587 1566 1632 1541 1687 1523 1732 1490 1772 1463 1842 1400 1902 1325 2007 1130 2042 1010 2092 830 2122 640 2147 430 2160 230 2167 120 2164 16z"/>
<path fill="#952800" d="M18 16V1321L150 1330 330 1358 500 1390 650 1423 710 1433 750 1445 790 1450 830 1462 870 1466 920 1481 1100 1506 1290 1511 1390 1493 1490 1477 1540 1463 1587 1445 1637 1420 1672 1390 1727 1360 1802 1285 1877 1183 1932 1070 1967 975 1982 940 2012 840 2042 720 2062 590 2082 440 2094 280 2102 150 2103 16z"/>
<path fill="#7b1800" d="M18 16V1199L200 1220 400 1252 570 1290 730 1328 785 1334 850 1357 1020 1389 1200 1398 1370 1386 1490 1354 1525 1332 1590 1311 1700 1226 1732 1195 1782 1130 1844 1030 1864 965 1907 890 1942 780 1972 650 1997 520 2005 430 2017 370 2027 230 2032 130 2032 16z"/>
<path fill="#620700" d="M18 16V1065L225 1078 300 1100 410 1113 470 1135 590 1160 620 1173 780 1216 950 1255 1130 1270 1290 1263 1440 1232 1530 1188 1572 1167 1632 1103 1680 1072 1702 1025 1762 955 1797 865 1830 815 1867 700 1897 590 1922 450 1930 370 1942 280 1950 150 1957 16z"/>
<path fill="#5b0505" d="M18 16V908L150 919 330 943 400 966 510 990 560 1010 620 1023 680 1048 760 1063 840 1090 1020 1122 1190 1126 1350 1105 1400 1078 1470 1055 1560 990 1577 975 1612 920 1672 860 1717 765 1742 720 1792 590 1817 490 1822 430 1842 340 1852 200 1862 130 1865 16z"/>
<path fill="#701212" d="M18 16V711L160 728 260 748 350 775 450 793 510 825 540 830 580 849 620 857 645 872 685 877 740 903 770 910 830 916 890 943 1085 966 1250 955 1300 931 1368 919 1428 872 1470 853 1490 830 1525 805 1567 745 1642 635 1687 530 1697 460 1722 390 1732 310 1747 200 1758 120 1756 16z"/>
<path fill="#851f1f" d="M18 16V430L115 444 250 484 420 553 490 588 570 631 640 660 715 686 750 692 790 711 840 725 885 728 950 757 1125 768 1190 746 1255 743 1315 703 1355 686 1420 632 1450 600 1470 570 1490 528 1524 493 1568 375 1579 350 1602 240 1614 170 1620 16z"/>
<path fill="#9a2c2c" d="M478 16L513 170 643 322 705 362 918 469 990 460 1062 486 1205 460 1255 397 1298 379 1313 340 1355 298 1363 273 1374 260 1385 215 1416 108 1420 16z"/>
</svg>
<svg class="axes" viewBox="0 0 12 12"><path d="M1 0v11" stroke="#f5e800" stroke-width="1.500"/><path d="M1 11h11" stroke="#f03030" stroke-width="1.500"/></svg>
</div>
</div>
</section>
</main>
</body>
</html>
```
FILE: styles.css
```css
* { box-sizing: border-box; }

body {
  margin: 0;
  height: 100vh;
  display: flex;
  flex-direction: column;
  overflow: hidden;
  background: #f7f7f7;
  color: #2f3c42;
  font-family: "Noto Sans", sans-serif;
  font-size: 29px;
  line-height: 42px;
}

button, input, select { font: inherit; color: inherit; margin: 0; }
button { padding: 0; }
a { color: inherit; text-decoration: none; }
h2, h3, h4 { margin: 0; font-size: 29px; font-weight: 700; }
svg { display: block; flex: none; }
.defs { position: absolute; width: 0; height: 0; }
.axl { font: bold 9px "Noto Sans", sans-serif; fill: #707058; }
.axs { font: bold 8px "Noto Sans", sans-serif; fill: #707058; }
.axc { font: italic bold 13px "Noto Sans", sans-serif; fill: #111; }
.axe { font: italic bold 17px "Noto Sans", sans-serif; fill: #111; }

/* menu and toolbars */
.dark { background: #1b2224; color: #a3abb0; font-size: 30px; }
.menubar { display: flex; line-height: 30px; }
.menubar a { padding: 0 11px 8px; border-bottom: 2px solid transparent; }
.menubar a.on { padding: 0 13px 8px 8px; color: #e9ecec; border-color: #2eb398; }

.bar { display: flex; align-items: center; }
.bar-main { padding: 5px 0 3px; }
.bar-display { padding: 4px 0; border-top: 1px solid #cfcfcf; }
.bar-filters { height: 48px; }
.group { display: flex; flex: none; margin-right: 6px; }
.group.tight, .group.none { margin-right: 0; }

.tool {
  width: 41px;
  height: 40px;
  display: grid;
  place-items: center;
  border: 0;
  border-radius: 3px;
  background: none;
}
.tool svg { width: 21px; height: 21px; overflow: visible; }
.tool.active, .mini.active { background: #2eb398; border-color: #2eb398; }
.off > svg { opacity: .45; }

.field {
  height: 56px;
  min-width: 0;
  padding: 1px 10px 0;
  border: 1px solid #c6c8c9;
  border-radius: 3px;
  background: #fff;
  color: #2f3c42;
}
.field::placeholder { color: #9a9fa2; opacity: 1; }
.time-label { margin: 0 2px; }
.time { width: 281px; border-radius: 0; }
.spin {
  display: flex;
  align-items: center;
  width: 109px;
  height: 56px;
  margin: 0 8px 0 2px;
  border: 1px solid #30393c;
  border-radius: 3px;
  background: #20282b;
}
.spin input { width: 46px; padding: 0 0 0 10px; border: 0; background: none; color: #5d676b; }
.spin svg { width: 56px; height: 20px; }

.combo { position: relative; height: 56px; min-width: 0; }
.combo select {
  appearance: none;
  width: 100%;
  height: 100%;
  padding: 2px 24px 0 8px;
  border: 1px solid #c3c5c6;
  border-radius: 3px;
  background: #fbfbfb;
  opacity: 1;
}
.combo.dotted select { padding-left: 28px; }
.combo .mark { position: absolute; left: 7px; top: 23px; width: 10px; height: 10px; }
.combo::after {
  content: "";
  position: absolute;
  right: 8px;
  top: 26px;
  border: 4px solid transparent;
  border-top: 6px solid #3c474c;
  border-bottom: 0;
}
.combo.off select { border-color: #dadbdc; color: #9ea3a6; }
.combo.off::after { border-top-color: #c3c7c9; }
.array { width: 217px; margin-right: 4px; }
.component { width: 146px; margin-right: 8px; }
.repr { width: 308px; margin-right: 8px; }

/* side panel */
main { flex: 1; min-height: 0; display: grid; grid-template-columns: 650px minmax(0, 1fr); }
aside { position: relative; min-height: 0; display: flex; flex-direction: column; padding-bottom: 9px; }
.dock-title { display: flex; align-items: center; flex: none; height: 43px; padding-right: 4px; }
.dock-title h2 { flex: 1; text-align: center; }
.dock-title svg { width: 8px; height: 8px; margin: 0 5px; }
.tree { flex: none; height: 555px; margin-right: 5px; padding-top: 4px; border: 1px solid #cfcfcf; border-left: 0; background: #fff; }
.node { position: relative; display: flex; align-items: center; height: 42px; padding-left: 3px; }
.node.root { padding-left: 51px; }
.node::before { content: ""; position: absolute; left: 55px; top: -2px; height: 5px; border-left: 1px solid #777; }
.server { width: 8px; height: 14px; margin-right: 4px; }
.eye { width: 14px; height: 10px; margin-right: 30px; }
.cube { width: 16px; height: 16px; margin-right: 1px; }
.node span { padding: 0 3px; }
.node .picked { line-height: 36px; background: #2eb398; color: #fff; border: 1px dashed #279a83; padding: 0 4px 0 1px; }
.handle-h { flex: none; width: 48px; height: 2px; margin: 2px 0 8px 298px; background: #e4e5e8; }
.tabs { display: flex; flex: none; margin-right: 5px; box-shadow: inset 0 -2px #cfcfcf; }
.tabs a { padding: 1px 14px 4px; border-bottom: 2px solid transparent; }
.tabs .on { padding-left: 11px; padding-right: 17px; border-color: #2eb398; }

.props { flex: 1; min-height: 0; overflow: hidden; padding: 8px 13px 0 5px; }
.row { display: flex; align-items: center; }
.grow { flex: 1 1 0; min-width: 0; }
.actions { gap: 2px; }
.search { gap: 2px; margin-top: 6px; }
.btn { height: 56px; padding-top: 2px; border: 1px solid #c3c5c6; border-radius: 3px; background: #fbfbfb; }
.btn:disabled { color: #9ea3a6; border-color: #dadbdc; }
.mini {
  display: grid;
  place-items: center;
  width: 38px;
  height: 34px;
  border: 1px solid #c3c5c6;
  border-radius: 3px;
  background: #fbfbfb;
}
.mini:disabled { border-color: #dadbdc; }
.mini svg { width: 15px; height: 15px; }
.mini.narrow { width: 34px; }
.minis { display: flex; flex: none; gap: 4px; }

.section { display: flex; align-items: center; margin: 11px 0; padding-left: 13px; }
.section h3 { flex: 1; min-width: 0; margin: 0 16px 0 6px; overflow: hidden; white-space: nowrap; font-size: 28px; }
.minus { width: 14px; height: 4px; }
.status { height: 166px; margin: 12px 1px 5px; border: 1px solid #cfcfcf; background: #fff; padding-top: 3px; }
.entry { display: flex; align-items: center; height: 55px; padding-left: 5px; }
.entry.head { font-weight: 700; }
.entry.head label { margin-left: 10px; flex: 1; }
.drop { width: 18px; height: 18px; }
.entry.head::after { content: ""; height: 34px; margin-right: 1px; border-left: 1px solid #cfcfcf; }
.ptsicon { width: 14px; height: 14px; margin: 0 7px 0 8px; }

input[type="checkbox"] {
  appearance: none;
  flex: none;
  width: 14px;
  height: 14px;
  border: 1px solid #8d9699;
  border-radius: 2px;
  background: #fff;
}
input[type="checkbox"]:checked { border-color: #2eb398; background: #2eb398; }
input[type="checkbox"]:checked::before {
  content: "";
  display: block;
  width: 5px;
  height: 8px;
  margin: 0 0 0 4px;
  border: solid #fff;
  border-width: 0 2px 2px 0;
  transform: rotate(45deg);
}

.form { display: grid; grid-template-columns: 215px minmax(0, 1fr); align-items: center; }
.form > label { padding-top: 2px; white-space: nowrap; }
.time-row { grid-template-columns: 154px minmax(0, 1fr); }
.axes-row { grid-template-columns: 233px minmax(0, 1fr); margin-top: 15px; }
.check { display: flex; align-items: center; gap: 9px; white-space: nowrap; }
.props h4 { padding-top: 2px; line-height: 51px; }
.coloring { gap: 4px; margin-right: 42px; }
.edit { gap: 4px; margin-top: 4px; }
.slide { display: flex; align-items: center; gap: 6px; }
.slide .field { flex: 1; width: 0; }

input[type="range"] { appearance: none; flex: none; width: 130px; height: 16px; background: none; }
input[type="range"]::-webkit-slider-runnable-track { height: 6px; border-radius: 3px; background: #d0d0d0; }
input[type="range"].full::-webkit-slider-runnable-track { background: #2eb398; }
input[type="range"]::-webkit-slider-thumb {
  appearance: none;
  width: 16px;
  height: 16px;
  margin-top: -5px;
  border: 1px solid #b3b9cb;
  border-radius: 50%;
  background: #fff;
}
.handle-v { position: absolute; right: 1px; top: 869px; width: 2px; height: 48px; background: #e4e5e8; }

/* render area */
.work { display: flex; flex-direction: column; min-width: 0; min-height: 0; }
.layout-tabs { display: flex; flex: none; padding-top: 2px; }
.layout-tab { padding: 0 2px; border-bottom: 2px solid #2eb398; }
.inner { display: flex; align-items: center; height: 52px; padding: 1px 8px 0; gap: 13px; border: 1px dashed #cfcfcf; }
.inner svg { width: 8px; height: 8px; }
.add { width: 48px; border: 0; background: none; display: grid; place-items: center; }
.add svg { width: 16px; height: 16px; }
.frame {
  flex: 1;
  min-height: 0;
  display: flex;
  flex-direction: column;
  padding: 4px 0 2px 3px;
  border: 1px solid #cfcfcf;
  border-right: 0;
  background: #fff;
}
.view-bar { display: flex; align-items: center; flex: none; height: 42px; background: #f7f7f7; overflow: hidden; padding-bottom: 4px; }
.view-bar .group { margin-right: 5px; }
.view-bar .group.none { margin-right: 37px; }
.vt { display: grid; place-items: center; width: 36px; height: 36px; border: 0; background: none; }
.vt svg { width: 17px; height: 17px; }
.vt.txt { font-size: 12px; font-weight: 700; color: #707058; }
.more { width: 6px; height: 10px; }
.view-name { margin: 0 10px 0 auto; line-height: 34px; border-bottom: 1px solid #2f3c42; font-weight: 700; }
.corner { display: flex; flex: none; gap: 1px; margin-right: -2px; }
.corner button { display: grid; place-items: center; width: 36px; height: 36px; border: 1px solid #cfcfcf; border-radius: 3px; background: #fbfbfb; }
.corner svg { width: 8px; height: 8px; }
.corner .split { width: 14px; height: 14px; }
.render {
  position: relative;
  flex: 1;
  min-height: 0;
  display: flex;
  flex-direction: column;
  align-items: center;
  padding: 87px 23px 0 0;
  border: solid #f7f7f7;
  border-width: 0 0 3px 2px;
}
.legend { width: 473px; height: 113px; background: #d4f5ff; font: 32px "Liberation Sans", sans-serif; }
.plot { width: 95%; max-width: 1138px; margin-top: 126px; }
.axes { position: absolute; left: 21px; bottom: 19px; width: 12px; height: 12px; }
```
